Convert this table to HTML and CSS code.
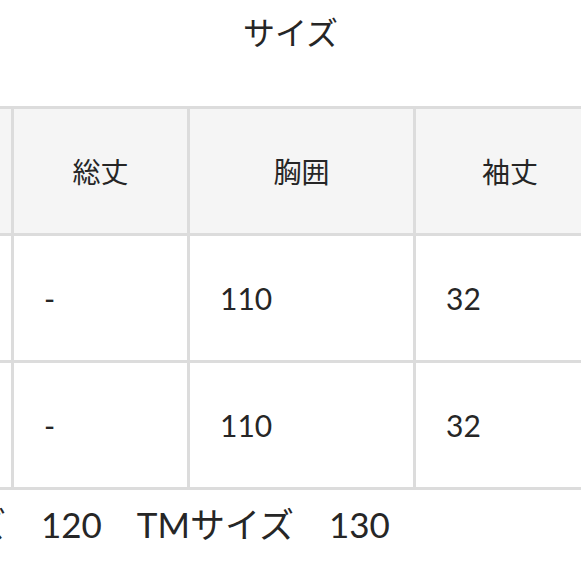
FILE: index.html
```html
<!DOCTYPE html>
<html lang="ja">
<head>
<meta charset="utf-8">
<link rel="stylesheet" href="styles.css">
</head>
<body>
<h2 class="title">サイズ</h2>
<div class="scroller">
<table class="size-table">
<colgroup>
<col class="c0"><col class="c1"><col class="c2"><col class="c3">
</colgroup>
<thead>
<tr><th class="first"></th><th>総丈</th><th>胸囲</th><th>袖丈</th></tr>
</thead>
<tbody>
<tr><td class="first"></td><td>-</td><td>110</td><td>32</td></tr>
<tr><td class="first"></td><td>-</td><td>110</td><td>32</td></tr>
</tbody>
</table>
</div>
<p class="note">サイズ　120　TMサイズ　130</p>
</body>
</html>
```
FILE: styles.css
```css
html, body {
  margin: 0;
  padding: 0;
  background: #fff;
}
body {
  font-family: "Lato", "Noto Sans CJK JP", "Noto Sans", sans-serif;
  color: #262626;
  width: 581px;
  overflow: hidden;
}
.title {
  margin: 0;
  padding-top: 15px;
  height: 91px;
  font-family: "Noto Sans CJK JP", sans-serif;
  font-size: 32px;
  line-height: 32px;
  font-weight: 400;
  text-align: center;
}
.scroller {
  overflow: hidden;
  width: 581px;
}
.size-table {
  border-collapse: separate;
  border-spacing: 0;
  table-layout: fixed;
  width: 696px;
  margin-left: -89px;
}
.c0 { width: 103px; }
.c1 { width: 176px; }
.c2 { width: 226px; }
.c3 { width: 191px; }
th, td {
  border-right: 3px solid #dcdcdc;
  border-bottom: 3px solid #dcdcdc;
  height: 124px;
  padding: 0;
  box-sizing: content-box;
  vertical-align: middle;
  font-weight: 400;
}
th {
  border-top: 3px solid #dcdcdc;
  background: #f5f5f5;
  font-family: "Noto Sans CJK JP", sans-serif;
  font-size: 28px;
  text-align: center;
}
td {
  font-size: 30px;
  text-align: left;
  padding-left: 30px;
}
td.first, th.first {
  border-left: 3px solid #dcdcdc;
}
.note {
  margin: 17px 0 0 -98px;
  font-size: 35px;
  line-height: 34px;
  white-space: nowrap;
}
```
